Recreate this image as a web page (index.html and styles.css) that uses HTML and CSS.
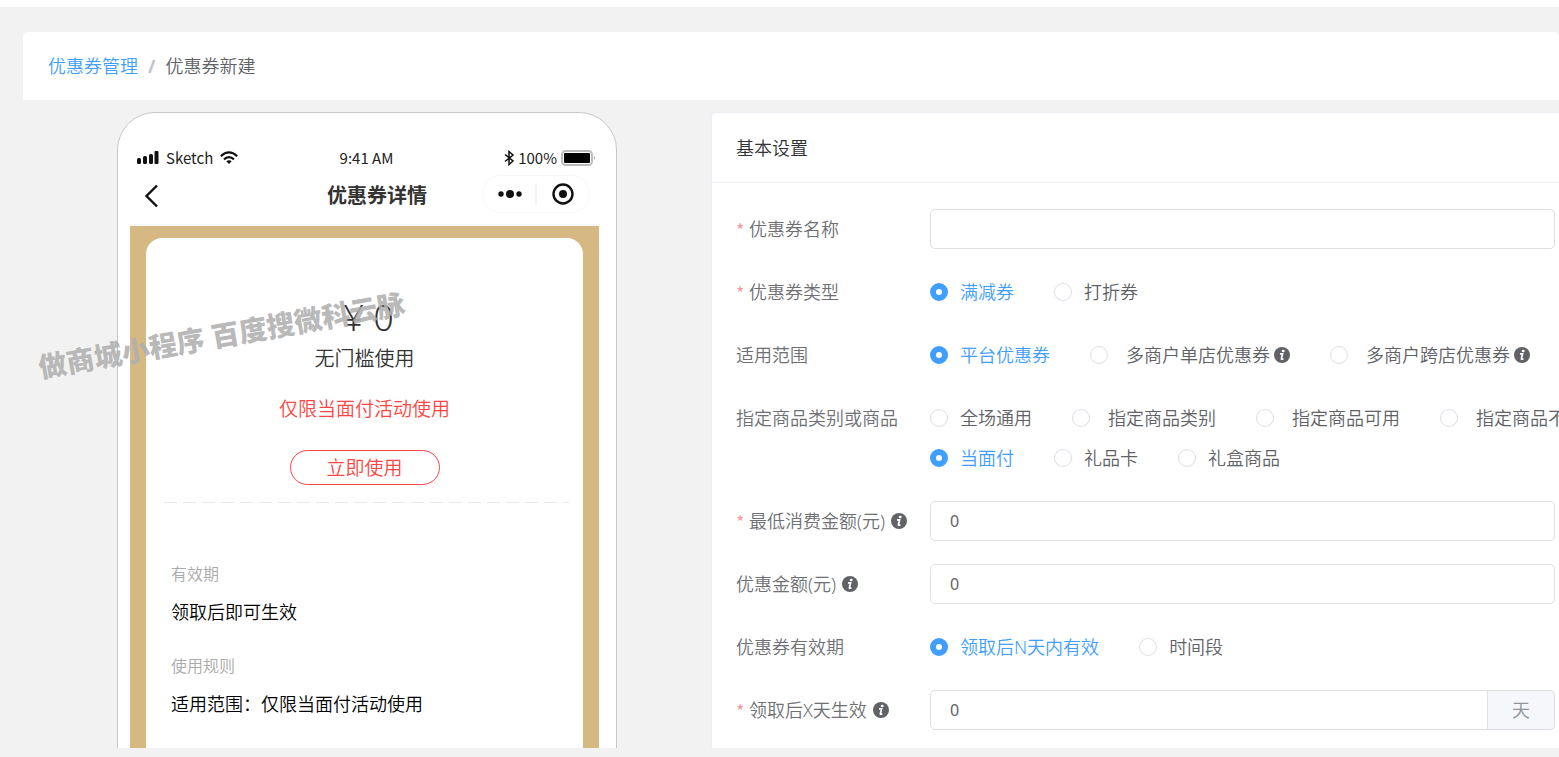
FILE: index.html
```html
<!DOCTYPE html>
<html lang="zh-CN">
<head>
<meta charset="utf-8">
<title>优惠券新建</title>
<link rel="stylesheet" href="styles.css">
</head>
<body>
<svg class="sprite" aria-hidden="true">
  <symbol id="info" viewBox="0 0 16 16">
    <circle cx="8" cy="8" r="8" fill="currentColor"/>
    <ellipse cx="9.2" cy="4" rx="1.5" ry="1.3" fill="#fff"/>
    <path d="M6 6.800h2.600L7.400 11.600q-.1.900.6.700l1.400-.6" fill="none" stroke="#fff" stroke-width="1.700"/>
  </symbol>
</svg>
<main class="page">
  <nav class="breadcrumb">
    <a href="#">优惠券管理</a><span class="slash">/</span><span>优惠券新建</span>
  </nav>
  <div class="columns">
    <section class="preview">
      <div class="phone">
        <div class="status">
          <div class="status-side">
            <svg width="22" height="14" viewBox="0 0 22 14"><g fill="#111"><rect x="0" y="7" width="4" height="6" rx="1.5"/><rect x="6" y="5" width="4" height="8" rx="1.5"/><rect x="12" y="3" width="4" height="10" rx="1.5"/><rect x="17.500" y="0" width="4" height="13" rx="1"/></g></svg>
            <span>Sketch</span>
            <svg width="18" height="14" viewBox="0 0 18 14"><g fill="none" stroke="#111" stroke-width="2.200"><path d="M.8 5.200Q9-2.400 17.200 5.200"/><path d="M4 8.300Q9 3.900 14 8.300"/></g><path d="M6.300 10.200Q9 8.200 11.700 10.200L9 13z" fill="#111"/></svg>
          </div>
          <span>9:41 AM</span>
          <div class="status-side status-right">
            <svg width="10" height="16" viewBox="0 0 10 16"><path d="M1 4.500l8 6.500-4 3.500V1.500L9 5l-8 6.500" fill="none" stroke="#111" stroke-width="1.500"/></svg>
            <span>100%</span>
            <svg class="battery" width="35" height="16" viewBox="0 0 35 16"><rect x="1" y="1" width="30" height="14" rx="3.500" fill="#fff" stroke="#bbb" stroke-width="2"/><rect x="3" y="3" width="26" height="10" rx="1" fill="#000"/><path d="M33 6q2 2 0 4z" fill="#999"/></svg>
          </div>
        </div>
        <div class="titlebar">
          <svg width="16" height="24" viewBox="0 0 16 24"><path d="M15 1.500L4.500 12 15 22.500" fill="none" stroke="#111" stroke-width="2.400"/></svg>
          <h1>优惠券详情</h1>
          <svg class="capsule" width="108" height="38" viewBox="0 0 108 38"><rect x=".5" y=".5" width="107" height="37" rx="18.500" fill="#fff" stroke="#f8f8f8"/><path d="M54 8v22" stroke="#e8e8e8"/><g fill="#111"><circle cx="19" cy="19" r="2.700"/><circle cx="28" cy="19" r="4"/><circle cx="37" cy="19" r="2.700"/><circle cx="81" cy="19" r="4"/></g><circle cx="81" cy="19" r="9.500" fill="none" stroke="#111" stroke-width="2.400"/></svg>
        </div>
        <div class="coupon-bg">
          <div class="coupon">
            <div class="coupon-top">
              <p class="price">¥ 0</p>
              <p class="threshold">无门槛使用</p>
              <p class="limit">仅限当面付活动使用</p>
              <button class="use" type="button">立即使用</button>
            </div>
            <div class="dashes"></div>
            <dl class="rules">
              <dt>有效期</dt><dd>领取后即可生效</dd>
              <dt>使用规则</dt><dd>适用范围：仅限当面付活动使用</dd>
            </dl>
          </div>
        </div>
      </div>
    </section>
    <form class="card">
      <h2>基本设置</h2>
      <div class="fields">
        <label class="name required" for="title">优惠券名称</label>
        <input class="text" id="title" type="text">

        <span class="name required">优惠券类型</span>
        <div class="radios">
          <label><input type="radio" name="type" checked><span>满减券</span></label>
          <label><input type="radio" name="type"><span>打折券</span></label>
        </div>

        <span class="name">适用范围</span>
        <div class="radios">
          <label><input type="radio" name="scope" checked><span>平台优惠券</span></label>
          <label class="wide"><input type="radio" name="scope"><span>多商户单店优惠券</span><svg class="info"><use href="#info"/></svg></label>
          <label class="wide"><input type="radio" name="scope"><span>多商户跨店优惠券</span><svg class="info"><use href="#info"/></svg></label>
        </div>

        <span class="name">指定商品类别或商品</span>
        <div>
          <div class="radios">
            <label><input type="radio" name="goods"><span>全场通用</span></label>
            <label class="wide"><input type="radio" name="goods"><span>指定商品类别</span></label>
            <label class="wide"><input type="radio" name="goods"><span>指定商品可用</span></label>
            <label class="wide"><input type="radio" name="goods"><span>指定商品不</span></label>
          </div>
          <div class="radios">
            <label><input type="radio" name="goods" checked><span>当面付</span></label>
            <label><input type="radio" name="goods"><span>礼品卡</span></label>
            <label><input type="radio" name="goods"><span>礼盒商品</span></label>
          </div>
        </div>

        <label class="name required" for="min">最低消费金额(元)<svg class="info"><use href="#info"/></svg></label>
        <input class="text" id="min" type="text" value="0">

        <label class="name" for="amount">优惠金额(元)<svg class="info"><use href="#info"/></svg></label>
        <input class="text" id="amount" type="text" value="0">

        <span class="name">优惠券有效期</span>
        <div class="radios">
          <label><input type="radio" name="valid" checked><span>领取后N天内有效</span></label>
          <label><input type="radio" name="valid"><span>时间段</span></label>
        </div>

        <label class="name required" for="days">领取后X天生效<svg class="info"><use href="#info"/></svg></label>
        <div class="group">
          <input class="text" id="days" type="text" value="0">
          <span class="unit">天</span>
        </div>
      </div>
    </form>
  </div>
  <div class="watermark">做商城小程序 百度搜微科云脉</div>
</main>
</body>
</html>
```
FILE: styles.css
```css
* { box-sizing: border-box; }

body {
  margin: 0;
  height: 100vh;
  padding-top: 7px;
  overflow: hidden;
  background: #fff;
  color: #606266;
  font: 350 18px/24px "Noto Sans", "Noto Sans CJK SC", sans-serif;
}

h1, h2, p, dl, dd { margin: 0; }

.sprite { position: absolute; width: 0; height: 0; }

.page {
  display: flex;
  flex-direction: column;
  gap: 12px;
  height: 100%;
  padding: 25px 0 9px 23px;
  background: #f2f2f2;
}

.breadcrumb {
  display: flex;
  align-items: center;
  flex: none;
  height: 68px;
  padding: 0 25px;
  background: #fff;
  border-radius: 5px 5px 0 0;
}

.breadcrumb a { color: #409eff; text-decoration: none; }

.slash { margin: 0 10px; color: #c0c4cc; font-weight: 700; }

.columns {
  display: grid;
  grid-template-columns: 688px minmax(0, 1fr);
  flex: 1;
  min-height: 0;
  overflow: hidden;
}

.preview { padding-left: 94px; }

.phone {
  width: 500px;
  padding: 32px 17px 0 12px;
  background: #fff;
  border: 1px solid #c8c8c8;
  border-radius: 38px 38px 0 0;
}

.status {
  display: grid;
  grid-template-columns: 1fr auto 1fr;
  align-items: center;
  height: 26px;
  padding: 0 3px 0 7px;
  color: #222;
  font: 400 15px/26px "Noto Sans CJK SC", sans-serif;
}

.status-side { display: flex; align-items: center; gap: 7px; }

.status-right { justify-content: flex-end; gap: 4px; }

.titlebar {
  display: grid;
  grid-template-columns: 185px auto 1fr;
  align-items: center;
  height: 55px;
  padding: 0 9px 4px 12px;
  border-bottom: 2px solid #f8f8f8;
}

.titlebar h1 { color: #333; font-size: 20px; font-weight: 700; }

.capsule { justify-self: end; margin-bottom: 4px; }

.coupon-bg { padding: 12px 16px 0; background: #d6b883; }

.coupon {
  height: 560px;
  background: #fff;
  border-radius: 16px 16px 0 0;
}

.coupon-top {
  display: flex;
  flex-direction: column;
  align-items: center;
  padding-top: 56px;
  color: #333;
}

.price { padding-left: 8px; font-size: 36px; line-height: 48px; }

.threshold { margin-top: 5px; font-size: 20px; }

.limit { margin-top: 26px; color: #ff4544; font-size: 19px; }

.use {
  width: 150px;
  height: 35px;
  margin-top: 29px;
  padding: 0;
  background: #fff;
  border: 1px solid #ff4544;
  border-radius: 18px;
  color: #ff4544;
  font: inherit;
  font-size: 19px;
}

.dashes {
  height: 1px;
  margin: 17px 14px 0 18px;
  background: repeating-linear-gradient(90deg, #e8e8e8 0 13px, transparent 13px 19px);
}

.rules { padding: 59px 25px 0; color: #000; }

.rules dt { color: #aaa; font-size: 16px; }

.rules dd { margin: 14px 0 30px; }

.card {
  background: #fff;
  border: 1px solid #ebeef5;
  border-right: 0;
  border-radius: 5px 0 0 0;
}

.card h2 {
  padding: 23px 24px 22px;
  border-bottom: 1px solid #ebeef5;
  color: #303133;
  font-size: 18px;
  font-weight: 350;
}

.fields {
  display: grid;
  grid-template-columns: 194px minmax(0, 1fr);
  row-gap: 23px;
  padding: 26px 4px 20px 24px;
}

.name {
  display: flex;
  align-items: center;
  height: 40px;
  color: #6e7074;
  white-space: nowrap;
}

.required::before {
  content: "*";
  width: 13px;
  color: #f89898;
  font-family: "Noto Sans CJK SC", sans-serif;
  font-weight: 400;
}

.info { flex: none; width: 16px; height: 16px; color: #606266; }

.name .info { margin-left: 6px; }

.radios { display: flex; gap: 40px; height: 40px; white-space: nowrap; }

.radios label { display: flex; align-items: center; flex: none; gap: 12px; }

.radios .wide { gap: 4px; }

.radios .wide input { margin-right: 14px; }

.radios input {
  appearance: none;
  width: 18px;
  height: 18px;
  margin: 0;
  border: 1px solid #dcdfe6;
  border-radius: 50%;
}

.radios input:checked { border: 6px solid #409eff; }

.radios input:checked + span { color: #409eff; }

.text {
  width: 100%;
  min-width: 0;
  height: 40px;
  padding: 0 19px;
  background: #fff;
  border: 1px solid #dcdfe6;
  border-radius: 5px;
  color: #606266;
  font: inherit;
  font-size: 16px;
  font-weight: 400;
}

.group { display: flex; }

.group .text { border-radius: 5px 0 0 5px; }

.unit {
  flex: none;
  width: 67px;
  background: #f5f7fa;
  border: 1px solid #dcdfe6;
  border-left: 0;
  border-radius: 0 5px 5px 0;
  color: #909399;
  line-height: 38px;
  text-align: center;
}

.watermark {
  position: absolute;
  left: 36px;
  top: 315px;
  color: rgba(176, 176, 176, 0.9);
  font-size: 28px;
  font-weight: 900;
  line-height: 40px;
  white-space: nowrap;
  transform: rotate(-10deg);
}
```
